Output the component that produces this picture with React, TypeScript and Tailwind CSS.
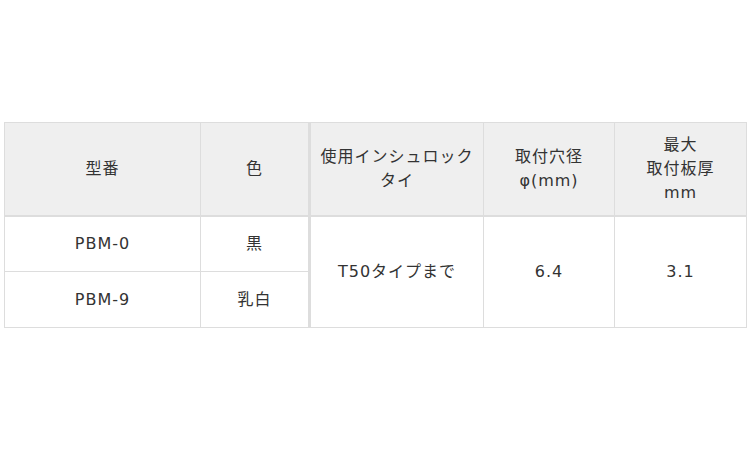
const rows = [
  { model: 'PBM-0', color: '黒' },
  { model: 'PBM-9', color: '乳白' },
];

export default function App() {
  return (
    <div
      className="w-[750px] h-[450px] bg-white pt-[122px] pl-[4px] text-[16px] tracking-[1px] text-[#333]"
      style={{ fontFamily: '"DejaVu Sans", "Noto Sans CJK JP", sans-serif' }}
    >
      <table className="table-fixed border-collapse w-[742px] text-center leading-6">
        <colgroup>
          <col className="w-[196px]" />
          <col className="w-[109px]" />
          <col className="w-[174px]" />
          <col className="w-[131px]" />
          <col className="w-[132px]" />
        </colgroup>
        <thead>
          <tr className="h-[93px] bg-[#efefef]">
            <th className="font-normal border border-[#dddddd] border-b-2">型番</th>
            <th className="font-normal border border-[#dddddd] border-b-2">色</th>
            <th className="font-normal border border-[#dddddd] border-b-2 border-l-[3px] border-l-double">
              使用インシュロック
              <br />
              タイ
            </th>
            <th className="font-normal border border-[#dddddd] border-b-2">
              取付穴径
              <br />
              φ(mm)
            </th>
            <th className="font-normal border border-[#dddddd] border-b-2">
              最大
              <br />
              取付板厚
              <br />
              mm
            </th>
          </tr>
        </thead>
        <tbody>
          {rows.map((row, i) => (
            <tr key={row.model} className="h-[56px]">
              <td className="border border-[#dddddd]">{row.model}</td>
              <td className="border border-[#dddddd]">{row.color}</td>
              {i === 0 && (
                <>
                  <td rowSpan={2} className="border border-[#dddddd] border-l-[3px] border-l-double">
                    T50タイプまで
                  </td>
                  <td rowSpan={2} className="border border-[#dddddd]">6.4</td>
                  <td rowSpan={2} className="border border-[#dddddd]">3.1</td>
                </>
              )}
            </tr>
          ))}
        </tbody>
      </table>
    </div>
  );
}
